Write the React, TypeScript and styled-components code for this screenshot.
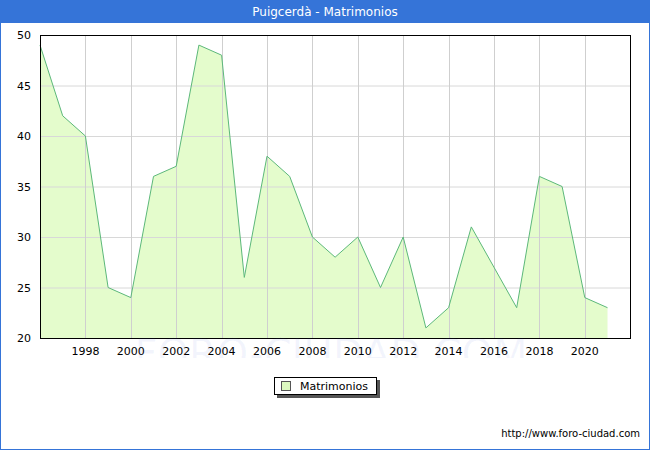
import styled, { createGlobalStyle } from 'styled-components';

const Global = createGlobalStyle`
  html, body { margin: 0; padding: 0; background: #fff; }
  body { font-family: "DejaVu Sans", Verdana, sans-serif; }
`;

const Frame = styled.div`
  width: 650px;
  height: 450px;
  box-sizing: border-box;
  border: 1px solid #3574d8;
  display: flex;
  flex-direction: column;
  background: #fff;
`;

const TitleBar = styled.div`
  height: 22px;
  background: #3574d8;
  color: #fff;
  font-size: 12px;
  display: flex;
  align-items: center;
  justify-content: center;
`;

const LegendRow = styled.div`
  display: flex;
  justify-content: center;
  padding-top: 19px;
  padding-left: 1px;
`;

const LegendBox = styled.div`
  display: flex;
  align-items: center;
  gap: 9px;
  height: 16px;
  padding: 0 8px 0 6px;
  border: 1px solid #000;
  background: #fff;
  font-size: 11px;
  box-shadow: 3px 3px 0 #555;
`;

const Swatch = styled.span`
  width: 8px;
  height: 8px;
  border: 1px solid #555;
  background: #ddfac0;
`;

const Footer = styled.div`
  margin-top: auto;
  padding: 0 9px 10px 0;
  text-align: right;
  font-size: 10px;
`;

const data = [49, 42, 40, 25, 24, 36, 37, 49, 48, 26, 38, 36, 30, 28, 30, 25, 30, 21, 23, 31, 27, 23, 36, 35, 24, 23];

const L = 39, R = 629, T = 12, B = 315;
const xOf = (i: number) => L + i * 22.7;
const yOf = (v: number) => B - ((v - 20) / 30) * (B - T);

function Chart() {
  const pts = data.map((v, i) => `${xOf(i)},${yOf(v)}`).join(' ');
  const area = `${xOf(0)},${B} ${pts} ${xOf(data.length - 1)},${B}`;
  const years = [1998, 2000, 2002, 2004, 2006, 2008, 2010, 2012, 2014, 2016, 2018, 2020];
  return (
    <svg width={648} height={335} style={{ display: 'block' }}>
      <polygon points={area} fill="#e4fccc" />
      {[25, 30, 35, 40, 45].map(v => (
        <line key={v} x1={L} x2={R} y1={yOf(v) + 0.5} y2={yOf(v) + 0.5} stroke="#d8d8d8" />
      ))}
      {years.map(y => {
        const x = Math.round(xOf(y - 1996)) + 0.5;
        return <line key={y} x1={x} x2={x} y1={T} y2={B} stroke="#cfcfcf" />;
      })}
      <polyline points={pts} fill="none" stroke="#5cb87a" strokeWidth={1} />
      <rect x={L + 0.5} y={T + 0.5} width={R - L} height={B - T} fill="none" stroke="#000" />
      <text x={330} y={345} textAnchor="middle" fontSize={40} fill="#3050d0" fillOpacity={0.06} fontFamily="DejaVu Sans, sans-serif">FORO-CIUDAD.COM</text>
      {[20, 25, 30, 35, 40, 45, 50].map(v => (
        <text key={v} x={30} y={yOf(v) + 4} textAnchor="end" fontSize={11} fontFamily="DejaVu Sans, sans-serif">{v}</text>
      ))}
      {years.map(y => (
        <text key={y} x={xOf(y - 1996)} y={332} textAnchor="middle" fontSize={11} fontFamily="DejaVu Sans, sans-serif">{y}</text>
      ))}
    </svg>
  );
}

export default function App() {
  return (
    <>
      <Global />
      <Frame>
        <TitleBar>Puigcerdà - Matrimonios</TitleBar>
        <Chart />
        <LegendRow>
          <LegendBox><Swatch />Matrimonios</LegendBox>
        </LegendRow>
        <Footer>http://www.foro-ciudad.com</Footer>
      </Frame>
    </>
  );
}
